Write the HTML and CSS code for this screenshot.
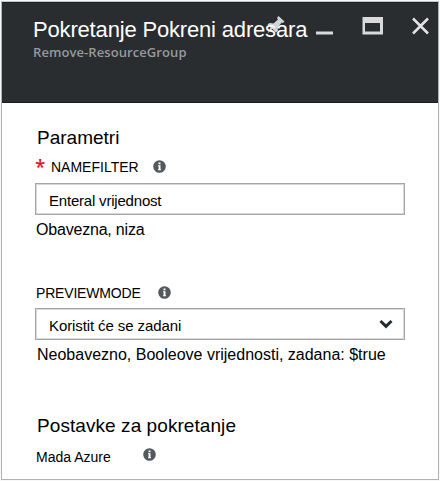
FILE: index.html
```html
<!DOCTYPE html>
<html lang="hr">
<head>
<meta charset="utf-8">
<title>Pokretanje</title>
<link rel="stylesheet" href="styles.css">
</head>
<body>
<main class="blade">
  <header class="head">
    <svg class="controls" width="164" height="28" viewBox="266 12 164 28" aria-hidden="true">
      <path fill="#d3d5d6" d="M278.500 16l6 5.500-1.700 1.500-1-.5-4 4.500v4l-1.800 1.500-3.500-3.500-5 4.500 3-6-3-3 2-1.500 4 .5 4.500-4-1-1.500z"/>
      <path fill="#d9dadb" d="M316 31.500h17v3h-17zM362.500 17h20.500v17.500h-20.500zM365 23v8.500h15V23z" fill-rule="evenodd"/>
      <path fill="none" stroke="#e2e3e4" stroke-width="2.500" d="M413 18.500l15 15M428 18.500l-15 15"/>
    </svg>
    <div class="titles">
      <h1 class="title">Pokretanje Pokreni adresara</h1>
      <p class="subtitle">Remove-ResourceGroup</p>
    </div>
  </header>
  <section class="content">
    <h2 class="heading parameters">Parametri</h2>
    <div class="label required"><span class="star">*</span><span class="name filter">NAMEFILTER</span>
      <svg class="info" viewBox="0 0 13 13"><circle cx="6.500" cy="6.500" r="6.300"/><path d="M5.500 2.500h2v1.700h-2zM5 5.300h2.500v4H8v1H5v-1h.6v-3H5z"/></svg></div>
    <div class="field"><span class="value enter">Enteral vrijednost</span></div>
    <p class="hint short">Obavezna, niza</p>
    <div class="label preview"><span class="name mode">PREVIEWMODE</span>
      <svg class="info" viewBox="0 0 13 13"><circle cx="6.500" cy="6.500" r="6.300"/><path d="M5.500 2.500h2v1.700h-2zM5 5.300h2.500v4H8v1H5v-1h.6v-3H5z"/></svg></div>
    <div class="field"><span class="value choice">Koristit će se zadani</span>
      <svg class="chevron" width="14" height="10" viewBox="0 0 14 10"><path d="M1.500 2l5.500 5.300L12.500 2"/></svg></div>
    <p class="hint long">Neobavezno, Booleove vrijednosti, zadana: $true</p>
    <h2 class="heading settings">Postavke za pokretanje</h2>
    <div class="label run"><span class="name azure">Mada Azure</span>
      <svg class="info" viewBox="0 0 13 13"><circle cx="6.500" cy="6.500" r="6.300"/><path d="M5.500 2.500h2v1.700h-2zM5 5.300h2.500v4H8v1H5v-1h.6v-3H5z"/></svg></div>
  </section>
</main>
</body>
</html>
```
FILE: styles.css
```css
* { box-sizing: border-box; }
body { display: flow-root; margin: 0; background: #f8f8f8; font-family: "Liberation Sans", Arial, sans-serif; color: #000; }
h1, h2, p { margin: 0; font-weight: 400; white-space: nowrap; }
.blade { width: 438px; height: 479px; margin: 1px; border: 1px solid #b2b2b2; border-top-color: #c4c6c7; background: #fff; }
.head { position: relative; height: 101px; padding: 15px 0 0 31px; background: #292d30; border-top: 1px solid #1c2128; border-bottom: 1px solid #171c20; }
.titles { position: relative; }
.title { height: 24px; line-height: 24px; font-size: 22px; letter-spacing: -0.17px; color: #fff; }
.subtitle { height: 20px; font: 600 13px/20px "Open Sans", sans-serif; letter-spacing: 0.08px; color: #97999b; }
.controls { position: absolute; left: 264px; top: 9px; }
.content { padding: 23px 0 0 33px; }
.heading { height: 24px; line-height: 24px; font-size: 19px; padding-left: 2px; }
.label { display: flex; align-items: center; height: 20px; font-size: 14px; line-height: 20px; white-space: nowrap; }
.name { flex: none; padding-top: 1px; }
.required { height: 22px; margin: 5px 0 6px; }
.star { width: 16px; color: #e81123; font-family: "Open Sans", sans-serif; font-weight: 600; font-size: 19px; line-height: 20px; padding-top: 1px; }
.filter { width: 102px; }
.mode { width: 123px; padding-left: 1px; letter-spacing: -0.18px; }
.azure { width: 108px; padding-left: 1px; }
.info { width: 13px; height: 13px; fill: #55585c; }
.info path { fill: #fff; }
.run .info { margin-bottom: 4px; }
.field { display: flex; align-items: center; justify-content: space-between; width: 370px; height: 32px; border: 1px solid #a6a6a6; box-shadow: inset 0 0 0 1px #d8d8d8; padding: 0 11px 0 13px; font-size: 15px; }
.value { padding-top: 2px; }
.enter { letter-spacing: -0.2px; }
.choice { letter-spacing: -0.1px; }
.chevron { fill: none; stroke: #252b32; stroke-width: 3; }
.hint { height: 22px; line-height: 22px; font-size: 16px; padding-left: 1px; }
.short { margin-top: 4px; letter-spacing: -0.2px; }
.long { margin-top: 4px; padding-left: 2px; }
.preview { margin: 41px 0 6px; }
.settings { margin-top: 48px; letter-spacing: 0.07px; }
.run { margin-top: 8px; }
```
